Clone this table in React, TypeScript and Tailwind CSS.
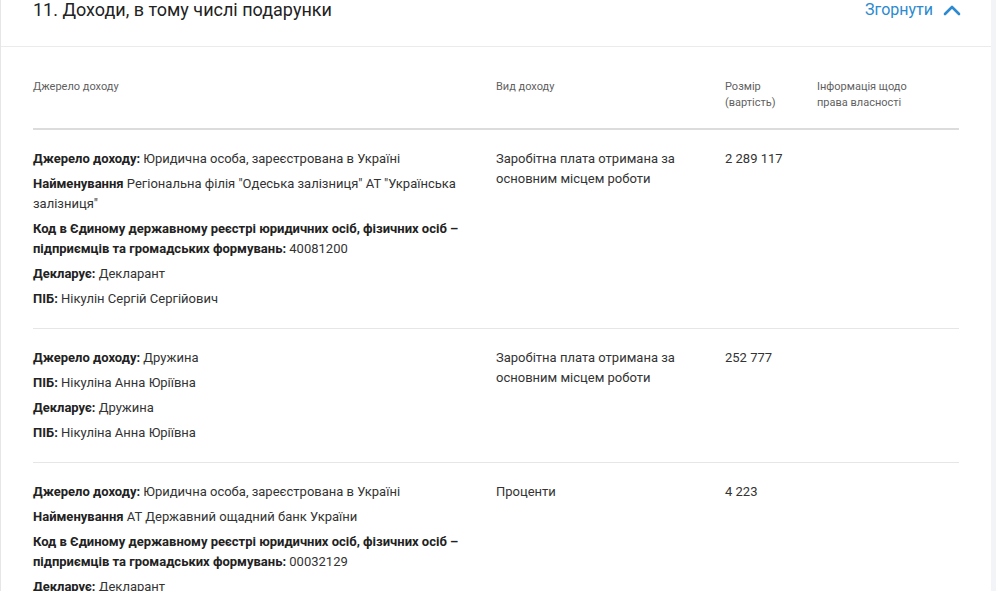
import React from "react";

type Field = { label: string; value: string };
type Row = { fields: Field[]; kind: string; amount: string };

const rows: Row[] = [
  {
    fields: [
      { label: "Джерело доходу:", value: "Юридична особа, зареєстрована в Україні" },
      { label: "Найменування", value: "Регіональна філія \"Одеська залізниця\" АТ \"Українська залізниця\"" },
      { label: "Код в Єдиному державному реєстрі юридичних осіб, фізичних осіб – підприємців та громадських формувань:", value: "40081200" },
      { label: "Декларує:", value: "Декларант" },
      { label: "ПІБ:", value: "Нікулін Сергій Сергійович" },
    ],
    kind: "Заробітна плата отримана за основним місцем роботи",
    amount: "2 289 117",
  },
  {
    fields: [
      { label: "Джерело доходу:", value: "Дружина" },
      { label: "ПІБ:", value: "Нікуліна Анна Юріївна" },
      { label: "Декларує:", value: "Дружина" },
      { label: "ПІБ:", value: "Нікуліна Анна Юріївна" },
    ],
    kind: "Заробітна плата отримана за основним місцем роботи",
    amount: "252 777",
  },
  {
    fields: [
      { label: "Джерело доходу:", value: "Юридична особа, зареєстрована в Україні" },
      { label: "Найменування", value: "АТ Державний ощадний банк України" },
      { label: "Код в Єдиному державному реєстрі юридичних осіб, фізичних осіб – підприємців та громадських формувань:", value: "00032129" },
      { label: "Декларує:", value: "Декларант" },
      { label: "ПІБ:", value: "Нікулін Сергій Сергійович" },
    ],
    kind: "Проценти",
    amount: "4 223",
  },
];

export default function App() {
  return (
    <div
      className="w-[996px] h-[591px] overflow-hidden bg-[#f3f4f7]"
      style={{ fontFamily: "Roboto, 'Noto Sans', sans-serif" }}
    >
      <div className="w-[991px] min-h-[591px] bg-white border-l border-[#e6e6e6]">
        <div className="h-[47px] border-b border-[#ebebeb] flex items-start justify-between pl-[32px] pr-[30px]">
          <h2 className="mt-[-1px] text-[18px] leading-[22px] text-[#222]">
            11. Доходи, в тому числі подарунки
          </h2>
          <button className="mt-[-1px] flex items-center gap-[10px] text-[16px] leading-[22px] text-[#2b8ad0]">
            <span>Згорнути</span>
            <svg width="18" height="12" viewBox="0 0 18 12" fill="none">
              <path d="M2 10 L9 3 L16 10" stroke="#2b8ad0" strokeWidth="2.6" strokeLinecap="round" strokeLinejoin="round" />
            </svg>
          </button>
        </div>
        <div className="ml-[32px] w-[926px]">
          <div className="h-[83px] pt-[32px] border-b-2 border-[#dcdcdc] flex text-[11px] leading-[16px] text-[#5f5f5f]">
            <div className="w-[463px] shrink-0">Джерело доходу</div>
            <div className="w-[229px] shrink-0">Вид доходу</div>
            <div className="w-[92px] shrink-0">Розмір<br />(вартість)</div>
            <div className="w-[100px] shrink-0">Інформація щодо права власності</div>
          </div>
          {rows.map((r, i) => (
            <div key={i} className="flex border-b border-[#e6e6e6] pt-[19px] pb-[19px] text-[13px] leading-[20px] text-[#333]">
              <div className="w-[463px] shrink-0 pr-[20px] flex flex-col gap-[5px]">
                {r.fields.map((f, j) => (
                  <p key={j}>
                    <b className="font-bold text-[#222]">{f.label}</b> {f.value}
                  </p>
                ))}
              </div>
              <div className="w-[229px] shrink-0 pr-[16px]">{r.kind}</div>
              <div className="w-[92px] shrink-0">{r.amount}</div>
              <div className="w-[141px] shrink-0"></div>
            </div>
          ))}
        </div>
      </div>
    </div>
  );
}
